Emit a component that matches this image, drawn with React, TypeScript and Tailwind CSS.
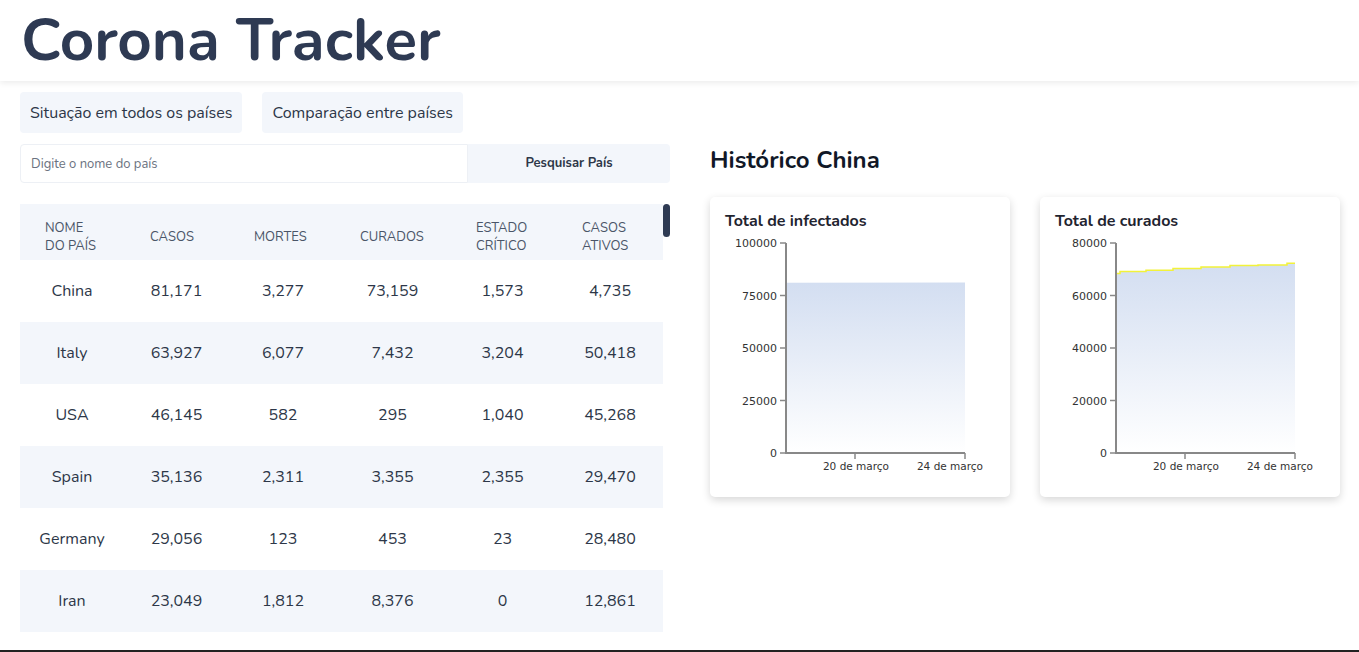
import React from 'react';

const rows = [
  ['China', '81,171', '3,277', '73,159', '1,573', '4,735'],
  ['Italy', '63,927', '6,077', '7,432', '3,204', '50,418'],
  ['USA', '46,145', '582', '295', '1,040', '45,268'],
  ['Spain', '35,136', '2,311', '3,355', '2,355', '29,470'],
  ['Germany', '29,056', '123', '453', '23', '28,480'],
  ['Iran', '23,049', '1,812', '8,376', '0', '12,861'],
];

const headers = [
  { lines: ['NOME', 'DO PAÍS'], pad: 'pl-[25px]' },
  { lines: ['CASOS'], pad: 'pl-[26px]' },
  { lines: ['MORTES'], pad: 'pl-[25px]' },
  { lines: ['CURADOS'], pad: 'pl-[23px]' },
  { lines: ['ESTADO', 'CRÍTICO'], pad: 'pl-[28px]' },
  { lines: ['CASOS', 'ATIVOS'], pad: 'pl-[25px]' },
];

const cols = 'grid grid-cols-[104px_105px_108px_111px_109px_106px]';

// chart geometry, relative to the svg (which starts at the card's left edge)
const AX = 76;
const TOP = 10;
const BOT = 220;
const RIGHT = 255;

interface ChartProps {
  id: string;
  ticks: string[];
  max: number;
  points: [number, number][]; // [x, value]
  line?: boolean;
}

const Chart: React.FC<ChartProps> = ({ id, ticks, max, points, line }) => {
  const y = (v: number) => BOT - (v / max) * (BOT - TOP);
  let d = '';
  points.forEach(([x, v], i) => {
    d += `${i === 0 ? 'M' : 'L'}${x},${y(v)} `;
  });
  const area = `${d}L${RIGHT},${BOT} L${AX},${BOT} Z`;
  return (
    <svg width="300" height="250" className="block">
      <defs>
        <linearGradient id={id} x1="0" y1="0" x2="0" y2="1">
          <stop offset="0%" stopColor="#d3def1" />
          <stop offset="100%" stopColor="#ffffff" />
        </linearGradient>
      </defs>
      <path d={area} fill={`url(#${id})`} />
      {line && <path d={d} fill="none" stroke="#f2f23a" strokeWidth="1.5" />}
      <g fontFamily="'DejaVu Sans', sans-serif" fontSize="11" fill="#333">
        {ticks.map((t, i) => {
          const ty = TOP + ((BOT - TOP) / 4) * i;
          return (
            <g key={t}>
              <line x1={AX - 6} x2={AX} y1={ty} y2={ty} stroke="#888" strokeWidth="1.5" />
              <text x={AX - 9} y={ty + 4} textAnchor="end">{t}</text>
            </g>
          );
        })}
        <line x1={145} x2={145} y1={BOT} y2={BOT + 6} stroke="#888" strokeWidth="1.5" />
        <line x1={RIGHT} x2={RIGHT} y1={BOT} y2={BOT + 6} stroke="#888" strokeWidth="1.5" />
        <text x={146} y={BOT + 17} textAnchor="middle" fontSize="10.5">20 de março</text>
        <text x={240} y={BOT + 17} textAnchor="middle" fontSize="10.5">24 de março</text>
      </g>
      <path d={`M${AX},${TOP} L${AX},${BOT} L${RIGHT},${BOT}`} fill="none" stroke="#888" strokeWidth="2" />
    </svg>
  );
};

const cured: [number, number][] = [
  [76, 68400], [80, 68400], [80, 69100], [106, 69100], [106, 69600], [133, 69600],
  [133, 70300], [161, 70300], [161, 70900], [190, 70900], [190, 71400], [218, 71400],
  [218, 71600], [247, 71600], [247, 72300], [255, 72300],
];

const Card: React.FC<{ title: string; children: React.ReactNode }> = ({ title, children }) => (
  <div className="w-[300px] h-[300px] bg-white rounded-[5px] shadow-[0_3px_9px_rgba(0,0,0,0.16)]">
    <div className="px-[15px] pt-[14px] h-[36px] text-[16px] leading-[21px] font-bold text-[#1f2430]">{title}</div>
    {children}
  </div>
);

export default function App() {
  return (
    <div className="h-[652px] flex flex-col bg-white font-['Nunito','Lato',sans-serif] text-[#2d3748] overflow-hidden">
      <header className="h-[81px] shrink-0 bg-white shadow-[0_2px_6px_rgba(0,0,0,0.08)] pl-[21px] flex items-center">
        <h1 className="text-[60px] leading-none font-bold text-[#2e3a53] -mt-[2px]">Corona Tracker</h1>
      </header>

      <main className="flex-1 px-5 pt-[11px]">
        <div className="flex gap-5">
          <button className="h-[41px] px-[10px] rounded bg-[#f3f6fb] text-[16px] text-[#2d3748]">Situação em todos os países</button>
          <button className="h-[41px] px-[10px] rounded bg-[#f3f6fb] text-[16px] text-[#2d3748]">Comparação entre países</button>
        </div>

        <div className="flex mt-[11px]">
          {/* left: search + table */}
          <div className="w-[650px]">
            <div className="flex h-[39px]">
              <input
                placeholder="Digite o nome do país"
                className="w-[448px] h-full border border-[#edf0f5] rounded-l px-[10px] text-[13px] placeholder:text-[#6b7280] outline-none"
              />
              <button className="flex-1 bg-[#f3f6fb] rounded-r text-[13px] font-bold text-[#2d3748]">Pesquisar País</button>
            </div>

            <div className="relative mt-[21px] h-[428px] overflow-hidden pr-[7px]">
              <div className={`${cols} h-[56px] pt-[10px] bg-[#f3f6fb] text-[13px] leading-[18px] text-[#4a5568]`}>
                {headers.map((h, i) => (
                  <div key={i} className={`flex flex-col justify-center ${h.pad}`}>
                    {h.lines.map((l) => (
                      <div key={l}>{l}</div>
                    ))}
                  </div>
                ))}
              </div>
              {rows.map((r, i) => (
                <div key={r[0]} className={`${cols} h-[62px] items-center text-[16px] ${i % 2 === 1 ? 'bg-[#f3f6fb]' : 'bg-white'}`}>
                  {r.map((c, j) => (
                    <div key={j} className="text-center">{c}</div>
                  ))}
                </div>
              ))}
              <div className="absolute right-0 top-0 w-[7px] h-[33px] rounded-full bg-[#2e3a53]" />
            </div>
          </div>

          {/* right: history */}
          <div className="ml-10 w-[630px]">
            <h2 className="text-[24px] leading-[32px] font-bold text-[#111827]">Histórico China</h2>
            <div className="flex gap-[30px] mt-[21px]">
              <Card title="Total de infectados">
                <Chart
                  id="gi"
                  ticks={['100000', '75000', '50000', '25000', '0']}
                  max={100000}
                  points={[[76, 81100], [255, 81171]]}
                />
              </Card>
              <Card title="Total de curados">
                <Chart
                  id="gc"
                  ticks={['80000', '60000', '40000', '20000', '0']}
                  max={80000}
                  points={cured}
                  line
                />
              </Card>
            </div>
          </div>
        </div>
      </main>

      <div className="h-[2px] shrink-0 bg-[#222]" />
    </div>
  );
}
